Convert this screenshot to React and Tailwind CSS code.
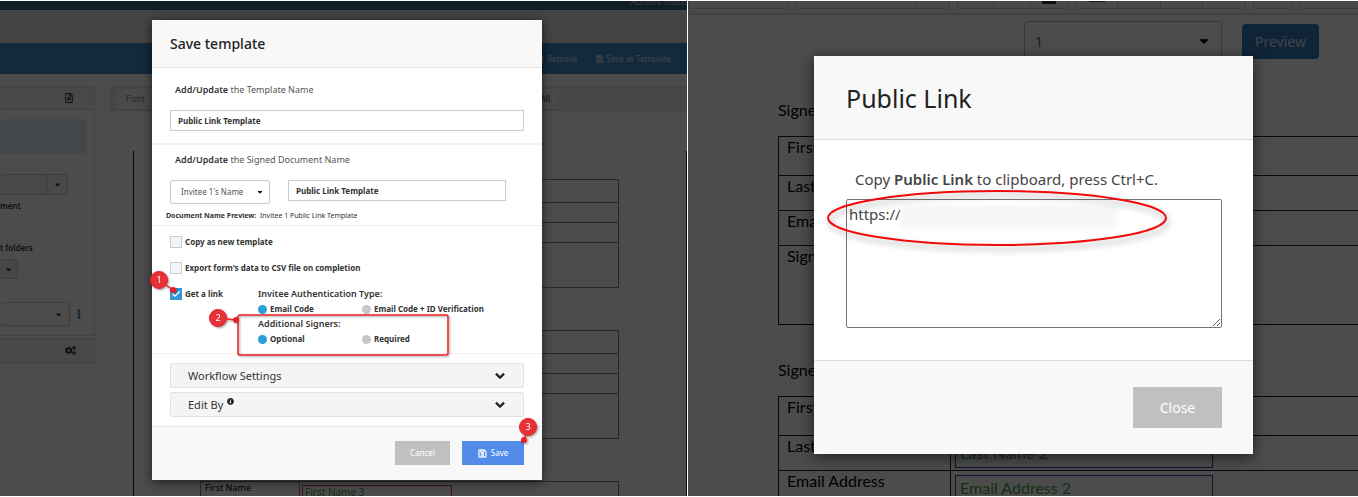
import React, { useState } from 'react';
import { FaRegSave, FaTimes, FaChevronDown, FaInfoCircle, FaCogs, FaRegFileAlt, FaCaretDown, FaEllipsisV, FaCheck } from 'react-icons/fa';

const SIGNER_ROWS = ['First Name', 'Last Name', 'Email Address', 'Signature'];

function Caret({ className = '' }) {
  return <FaCaretDown aria-hidden="true" className={`pointer-events-none ${className}`} />;
}

// Page behind the left dialog
function EditorPage() {
  return (
    <div className="h-full overflow-hidden bg-white text-[9px] leading-3 text-[#333]">
      <div className="flex h-[9px] items-end justify-end overflow-hidden bg-[#37657c] text-white/70">
        <span className="mb-0.5 whitespace-nowrap text-[8px]">Account Status</span>
      </div>
      <div className="h-[33px] border-b border-[#d8d8d8] bg-[#e4e4e4]" />
      <div className="flex h-[31px] items-center justify-end gap-[19px] bg-[#428bca] pr-4 text-[8px] text-white/80">
        <button type="button" className="flex items-center gap-0.5"><FaTimes />Remove</button>
        <button type="button" className="flex items-center gap-0.5"><FaRegSave strokeWidth="20" />Save as Template</button>
      </div>
      <div className="flex pt-3">
        <aside className="w-[95px] shrink-0">
          <div className="h-[250px] border border-l-0 border-[#ddd]">
            <div className="flex h-[23px] items-center justify-end border-b border-[#ddd] bg-[#f2f2f2] pr-5">
              <FaRegFileAlt className="text-[10px]" />
            </div>
            <div className="mt-[9px] mr-2 h-[35px] rounded-sm bg-[#d9edf7]" />
            <div className="mt-5 mr-[26px] flex h-[21px] rounded-sm border border-l-0 border-[#ccc] bg-[#f5f5f5]">
              <div className="flex-1 border-r border-[#ccc]" />
              <div className="flex w-5 items-center justify-center"><Caret /></div>
            </div>
            <p className="mt-[5px] text-[8px] font-semibold">ment</p>
            <p className="mt-[30px] text-[8px] font-semibold">t folders</p>
            <button type="button" aria-label="Folder options" className="mt-[5px] flex h-5 w-[18px] items-center justify-center rounded-sm border border-l-0 border-[#ccc] bg-[#eee]"><Caret /></button>
            <div className="mt-[23px] flex items-center gap-1">
              <div className="flex h-6 w-[70px] items-center justify-end rounded-sm border border-l-0 border-[#ccc] pr-1.5"><Caret /></div>
              <FaEllipsisV className="text-[10px] text-[#337ab7]" />
            </div>
          </div>
          <div className="mt-0.5 flex h-[25px] items-center justify-end border border-l-0 border-[#ddd] bg-[#f5f5f5] pr-[18px]">
            <FaCogs className="text-[11px]" />
          </div>
        </aside>
        <div className="ml-[15px] min-w-0 flex-1">
          <div className="flex h-[25px] items-center justify-between border border-[#ddd] bg-[#eaeaea] pr-32 pl-[5px]">
            <button type="button" className="h-5 w-16 rounded-sm bg-[#f8f8f8] px-2.5 text-left text-[9px] text-[#888]">Font</button>
            <button type="button" className="h-5 rounded-sm bg-[#f8f8f8] px-2 text-[8px]">All</button>
          </div>
          <div className="mt-10 ml-[23px] h-[400px] border-x border-[#222] pt-7 pr-[67px] pl-[66px]">
            {[1, 2, 3].map((n) => (
              <table key={n} className="mb-[42px] w-full border-collapse">
                <tbody>
                  {SIGNER_ROWS.map((label, i) => (
                    <tr key={label} className={i === 0 ? 'h-[23px]' : i === 3 ? 'h-[45px]' : 'h-5'}>
                      <td className="w-[99px] border border-[#888] py-0 pl-1 align-top text-black">{n === 3 && i === 0 ? label : null}</td>
                      <td className="border border-[#888] p-0 align-top">
                        {n === 3 && i === 0 && (
                          <div className="mt-[3px] ml-0.5 h-4 w-[150px] border border-[#d3406a] pl-0.5 text-[10px] leading-3 text-[#47a047]">First Name 3</div>
                        )}
                      </td>
                    </tr>
                  ))}
                </tbody>
              </table>
            ))}
          </div>
        </div>
      </div>
    </div>
  );
}

// Page behind the right dialog
function SigningPage() {
  return (
    <div className="h-full overflow-hidden bg-white text-base text-black">
      <div className="flex h-3.5 items-start gap-[7px] overflow-hidden border-b-2 border-[#dcdcdc] bg-[#f5f5f5]">
        <div className="h-2 w-[100px] rounded-b-sm border border-t-0 border-[#d0d0d0]" />
        <div className="flex h-2 w-[155px] justify-end rounded-b-sm border border-t-0 border-[#d0d0d0]"><div className="w-[34px] border-l border-[#d0d0d0]" /></div>
        <div className="grid h-2 w-[111px] grid-cols-3 divide-x divide-[#d0d0d0] rounded-b-sm border border-t-0 border-[#d0d0d0]">
          <div /><div /><div className="flex justify-center"><div className="h-[3px] w-3.5 bg-[#333]" /></div>
        </div>
        <div className="grid h-2 w-[171px] grid-cols-4 divide-x divide-[#d0d0d0] rounded-b-sm border border-t-0 border-[#d0d0d0]">
          <div className="flex justify-center"><div className="h-px w-4 bg-[#555]" /></div><div /><div /><div />
        </div>
        <div className="h-2 w-10 rounded-b-sm border border-t-0 border-[#d0d0d0]" />
        <div className="h-2 flex-1 rounded-bl-sm border border-t-0 border-r-0 border-[#d0d0d0]" />
      </div>
      <div className="flex items-start justify-end gap-5 pt-1.5 pr-[39px]">
        <div className="flex h-10 w-[198px] items-center justify-between rounded border border-[#bbb] pr-2 pl-2.5 text-[14px] text-[#337ab7]">
          <span>1</span>
          <Caret className="mr-0.5 text-[14px] text-black" />
        </div>
        <button type="button" className="mt-[3px] h-[35px] w-[77px] rounded-sm bg-[#337ab7] text-[14px] text-white/80">Preview</button>
      </div>
      <div className="pt-[37px] pl-[90px] font-['Lato','Noto_Sans',sans-serif]">
        {[1, 2].map((n) => (
          <section key={n} className="mb-[33px]">
            <h3 className="mb-3.5 leading-6">Signer {n}</h3>
            <table className="w-full border-collapse leading-5">
              <tbody>
                {SIGNER_ROWS.map((label, i) => (
                  <tr key={label} className={i === 0 ? 'h-[39px]' : i === 3 ? 'h-[79px]' : 'h-[35px]'}>
                    <td className="w-[172px] border border-[#222] px-2 py-0 align-top">{label}</td>
                    <td className="border border-r-0 border-[#222] px-1 pt-1 pb-0 align-top">
                      {n === 2 && i > 0 && (
                        <div className="h-7 w-[258px] border border-[#4a3f9a] px-1 leading-6 text-[#47a047]">{label} 2</div>
                      )}
                    </td>
                  </tr>
                ))}
              </tbody>
            </table>
          </section>
        ))}
      </div>
    </div>
  );
}

function CheckRow({ id, label, defaultChecked }) {
  return (
    <div className="flex h-3 items-center gap-[3px]">
      <span className="relative flex size-3">
        <input id={id} type="checkbox" defaultChecked={defaultChecked} className="peer size-3 appearance-none border border-[#c5ced4] bg-[#f1f5f8] checked:border-[#3498db] checked:bg-[#3498db]" />
        <FaCheck aria-hidden="true" className="pointer-events-none absolute inset-0 m-auto hidden text-[8px] text-white peer-checked:block" />
      </span>
      <label htmlFor={id} className="text-[8px] font-bold whitespace-nowrap">{label}</label>
    </div>
  );
}

function RadioGroup({ name, title, options }) {
  const [value, setValue] = useState(options[0]);
  return (
    <fieldset className="contents">
      <legend className="contents"><span className="font-semibold">{title}</span></legend>
      <div className="grid grid-cols-[104px_1fr]">
        {options.map((option) => (
          <label key={option} className="flex items-center gap-[3px] text-[8px] font-bold whitespace-nowrap">
            <input
              type="radio"
              name={name}
              checked={value === option}
              onChange={() => setValue(option)}
              className="size-[9px] appearance-none rounded-full bg-[#c8c8c8] checked:bg-[#2a9fd8]"
            />
            {option}
          </label>
        ))}
      </div>
    </fieldset>
  );
}

function Accordion({ title, info }) {
  return (
    <button type="button" className="flex h-[25px] w-full items-center justify-between rounded-xs border border-[#e2e2e2] bg-[#f4f4f4] pr-[18px] pl-[17px] text-[11px]">
      <span className="flex items-center gap-1">
        {title}
        {info && <FaInfoCircle className="mb-1.5 text-[7px] text-[#222]" />}
      </span>
      <FaChevronDown strokeWidth="50" className="text-[10px] text-[#222]" />
    </button>
  );
}

// Numbered markers that lie over the dialog
function Callouts() {
  const marks = [
    { n: 1, x: 7, y: 260, dx: 21, dy: 270 },
    { n: 2, x: 66, y: 298, dx: 84, dy: 300 },
    { n: 3, x: 376, y: 407, dx: 372, dy: 420 },
  ];
  return (
    <svg aria-hidden="true" width="390" height="460" className="pointer-events-none absolute top-0 left-0 overflow-visible drop-shadow-[1px_1px_1px_rgba(0,0,0,0.4)]">
      <rect x="86" y="295" width="210" height="40" rx="2" fill="none" stroke="#ee2428" strokeWidth="1.5" />
      {marks.map((m) => (
        <g key={m.n}>
          <line x1={m.x} y1={m.y} x2={m.dx} y2={m.dy} stroke="#ee2428" strokeWidth="1.5" />
          <circle cx={m.dx} cy={m.dy} r="3" fill="#ee1c25" />
          <circle cx={m.x} cy={m.y} r="8.5" fill="#e53238" stroke="#ee1c25" />
          <text x={m.x} y={m.y + 3} textAnchor="middle" fontSize="9" fill="#fff">{m.n}</text>
        </g>
      ))}
    </svg>
  );
}

function SaveTemplateDialog() {
  const inputClass = 'h-[21px] border border-[#ccc] bg-white px-[7px] text-[8px] font-bold text-[#333]';
  return (
    <div role="dialog" aria-labelledby="save-title" className="relative w-[390px] bg-white text-[9px] leading-3 text-[#333] shadow-[0_2px_10px_rgba(0,0,0,0.6)]">
      <header className="flex h-12 items-center border-b border-[#e5e5e5] bg-[#f8f8f8] px-[18px]">
        <h2 id="save-title" className="text-[14px] leading-5 font-medium text-[#222]">Save template</h2>
      </header>
      <div className="border-b-2 border-[#f2f2f2] px-[18px] pt-4 pb-3">
        <label htmlFor="template-name" className="block pl-[5px] text-[#555]"><b className="font-semibold text-[#333]">Add/Update</b> the Template Name</label>
        <input id="template-name" defaultValue="Public Link Template" className={`mt-3.5 block w-full ${inputClass}`} />
      </div>
      <div className="border-b border-[#eee] px-[18px] pt-[9px] pb-[3px]">
        <label htmlFor="document-name" className="block pl-[5px] text-[#555]"><b className="font-semibold text-[#333]">Add/Update</b> the Signed Document Name</label>
        <div className="mt-3.5 flex items-start gap-[18px]">
          <div className="relative w-[100px]">
            <select aria-label="Name source" className="block h-6 w-full appearance-none rounded-xs border border-[#ccc] bg-white pl-2.5 text-[8px] text-[#555]">
              <option>Invitee 1's Name</option>
            </select>
            <Caret className="absolute top-2 right-1.5 text-[8px] text-[#111]" />
          </div>
          <input id="document-name" defaultValue="Public Link Template" className={`mr-[18px] min-w-0 flex-1 ${inputClass}`} />
        </div>
        <p className="-ml-1 mt-1.5 text-[7px]"><b className="font-bold">Document Name Preview:</b>&nbsp; Invitee 1 Public Link Template</p>
      </div>
      <div className="border-b border-[#f2f2f2] px-[18px] pt-2.5 pb-2">
        <div className="flex flex-col gap-3.5">
          <CheckRow id="copy" label="Copy as new template" />
          <CheckRow id="export" label="Export form's data to CSV file on completion" />
          <div className="grid grid-cols-[88px_1fr]">
            <CheckRow id="link" label="Get a link" defaultChecked />
            <div className="flex flex-col gap-[3px]">
              <RadioGroup name="auth" title="Invitee Authentication Type:" options={['Email Code', 'Email Code + ID Verification']} />
              <RadioGroup name="signers" title="Additional Signers:" options={['Optional', 'Required']} />
            </div>
          </div>
        </div>
      </div>
      <div className="flex flex-col gap-1 px-[18px] py-[9px]">
        <Accordion title="Workflow Settings" />
        <Accordion title="Edit By" info />
      </div>
      <footer className="flex justify-end gap-3 border-t border-[#e5e5e5] bg-[#f8f8f8] px-[18px] pt-3.5 pb-[15px] text-[8px] text-white">
        <button type="button" className="h-6 w-[55px] bg-[#c0c0c0]">Cancel</button>
        <button type="button" className="flex h-6 w-[62px] items-center justify-center gap-1 bg-[#528bea]"><FaRegSave strokeWidth="20" className="text-[9px]" />Save</button>
      </footer>
      <Callouts />
    </div>
  );
}

function PublicLinkDialog() {
  return (
    <div role="dialog" aria-labelledby="link-title" className="relative w-[439px] bg-white text-[#444] shadow-[0_3px_14px_rgba(0,0,0,0.6)]">
      <header className="flex h-21 items-center border-b border-[#ddd] bg-[#f8f8f8] px-8">
        <h2 id="link-title" className="text-[25px] leading-8 text-[#222]">Public Link</h2>
      </header>
      <div className="pt-[27px] pr-[31px] pb-8 pl-8">
        <label htmlFor="public-link" className="block pl-[9px] text-[15px] leading-6 whitespace-nowrap">
          Copy <b className="font-semibold">Public Link</b> to clipboard, press Ctrl+C.
        </label>
        <div className="relative mt-2">
          <textarea id="public-link" defaultValue="https://" className="block h-[129px] w-full resize rounded-xs border border-[#777] bg-white px-0.5 py-0.5 text-[15px] leading-6" />
          <div className="pointer-events-none absolute top-1.5 left-[55px] h-[22px] w-[216px] bg-[#f6f6f6] blur-[2px]" />
        </div>
      </div>
      <footer className="flex justify-end border-t border-[#ddd] bg-[#f8f8f8] py-[26px] pr-[31px] pl-8">
        <button type="button" className="h-[41px] w-[89px] bg-[#c0c0c0] text-[14px] text-white">Close</button>
      </footer>
      <svg aria-hidden="true" width="344" height="60" className="pointer-events-none absolute top-[132px] left-3 drop-shadow-[2px_4px_3px_rgba(0,0,0,0.35)]">
        <ellipse cx="171" cy="30" rx="169" ry="27" fill="none" stroke="#f00a0a" strokeWidth="2" />
      </svg>
    </div>
  );
}

function App() {
  return (
    <main className="grid h-screen grid-cols-[687fr_670fr] gap-px overflow-hidden bg-white py-px font-['Noto_Sans','Open_Sans',sans-serif]">
      <div className="relative min-w-0 overflow-hidden">
        <EditorPage />
        <div className="absolute inset-0 flex items-start justify-center bg-black/70 pt-[19px] pl-[7px]">
          <SaveTemplateDialog />
        </div>
      </div>
      <div className="relative min-w-0 overflow-hidden">
        <SigningPage />
        <div className="absolute inset-0 flex items-start justify-center bg-black/70 pt-[55px] pl-[21px]">
          <PublicLinkDialog />
        </div>
      </div>
    </main>
  );
}

export default App;
